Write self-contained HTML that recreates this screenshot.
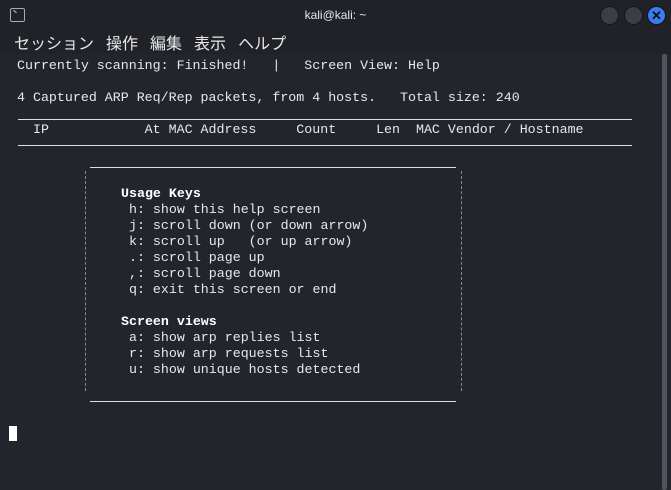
<!DOCTYPE html>
<html><head><meta charset="utf-8"><style>
*{margin:0;padding:0;box-sizing:border-box}
body{width:671px;height:490px;background:#23252c;overflow:hidden;position:relative;font-family:"Liberation Mono",monospace;color:#e6e6e6}
.t{position:absolute;font-size:13.3px;line-height:16px;white-space:pre;color:#e8e8e8}
.b{font-weight:bold;color:#fff}
.hl{position:absolute;height:1px;background:#e0e0e0}
.vl{position:absolute;width:0;border-left:1px dashed #8a8a8a}
.title{position:absolute;left:0;top:0;width:671px;height:30px;background:#202228;text-align:center;font-family:"Liberation Sans",sans-serif;font-size:12px;line-height:30px;color:#e8e8e8}
.menu{position:absolute;left:14px;top:30px;font-family:"Liberation Sans","Noto Sans CJK JP",sans-serif;font-size:16px;color:#e8e8e8}
.menu span{margin-right:12px}
.c{position:absolute;top:6px;width:19px;height:19px;border-radius:50%;background:#3b3e45;border:1px solid #15161a}
</style></head><body>
<div class="title">kali@kali: ~</div>
<div style="position:absolute;left:10px;top:8px;width:15px;height:14px;border:1.5px solid #aaa;border-radius:2px"></div>
<div style="position:absolute;left:13px;top:11px;width:4px;height:1px;background:#ccc;transform:rotate(40deg)"></div>
<div class="c" style="left:600px"></div>
<div class="c" style="left:624px"></div>
<div class="c" style="left:647px;background:#3a7bf0;color:#111;font:bold 13px/18px 'Liberation Sans',sans-serif;text-align:center">✕</div>
<div style="position:absolute;left:0;top:30px;width:671px;height:24px;background:#202228"></div>
<div class="menu"><span>セッション</span><span>操作</span><span>編集</span><span>表示</span><span>ヘルプ</span></div>
<div style="position:absolute;left:662px;top:54px;width:5px;height:436px;background:#4f535b;border-radius:2px"></div>

<div class="t" style="left:17px;top:58px">Currently scanning: Finished!   |   Screen View: Help</div>
<div class="t" style="left:17px;top:90px">4 Captured ARP Req/Rep packets, from 4 hosts.   Total size: 240</div>
<div class="hl" style="left:18px;top:119px;width:614px"></div>
<div class="t" style="left:17px;top:122px">  IP            At MAC Address     Count     Len  MAC Vendor / Hostname</div>
<div class="hl" style="left:18px;top:145px;width:614px"></div>

<div class="hl" style="left:90px;top:167px;width:366px"></div>
<div class="vl" style="left:85px;top:171px;height:220px"></div>
<div class="vl" style="left:461px;top:171px;height:220px"></div>
<div class="t b" style="left:121px;top:186px">Usage Keys</div>
<div class="t" style="left:121px;top:202px"> h: show this help screen
 j: scroll down (or down arrow)
 k: scroll up   (or up arrow)
 .: scroll page up
 ,: scroll page down
 q: exit this screen or end</div>
<div class="t b" style="left:121px;top:314px">Screen views</div>
<div class="t" style="left:121px;top:330px"> a: show arp replies list
 r: show arp requests list
 u: show unique hosts detected</div>
<div class="hl" style="left:90px;top:401px;width:366px"></div>

<div style="position:absolute;left:9px;top:426px;width:8px;height:15px;background:#fff"></div>
</body></html>
